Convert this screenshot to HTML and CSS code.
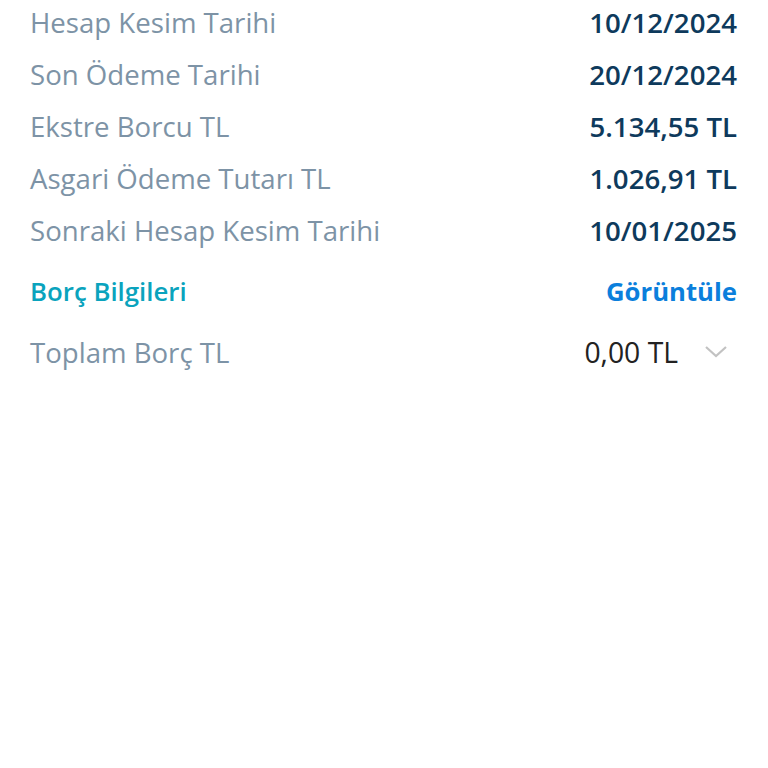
FILE: index.html
```html
<!DOCTYPE html>
<html lang="tr">
<head>
    <meta charset="UTF-8">
    <title>Ekstre</title>
    <link rel="stylesheet" href="styles.css">
</head>
<body>

<div class="ekstre">
    <div class="row">
        <span class="label">Hesap Kesim Tarihi</span>
        <span class="value">10/12/2024</span>
    </div>
    <div class="row">
        <span class="label">Son Ödeme Tarihi</span>
        <span class="value">20/12/2024</span>
    </div>
    <div class="row">
        <span class="label">Ekstre Borcu TL</span>
        <span class="value">5.134,55 TL</span>
    </div>
    <div class="row">
        <span class="label">Asgari Ödeme Tutarı TL</span>
        <span class="value">1.026,91 TL</span>
    </div>
    <div class="row">
        <span class="label">Sonraki Hesap Kesim Tarihi</span>
        <span class="value">10/01/2025</span>
    </div>

    <!--  borç bilgileri  -->
    <div class="row head">
        <span class="title">Borç Bilgileri</span>
        <a class="link">Görüntüle</a>
    </div>
    <div class="row total">
        <span class="label">Toplam Borç TL</span>
        <span class="amount">0,00 TL
            <svg class="chev" width="22" height="12" viewBox="0 0 22 12">
                <path d="M1 1 L11 10 L21 1" fill="none" stroke="#c2c2c2" stroke-width="2.2"/>
            </svg>
        </span>
    </div>
</div>

</body>
</html>
```

FILE: styles.css
```css
body {
    margin: 0;
    background: #fff;
    font-family: "Open Sans", "Noto Sans", sans-serif;
}

.ekstre {
    padding: 0 31px 0 30px;
    margin-top: -4px;
}

.row {
    display: flex;
    justify-content: space-between;
    align-items: center;
    height: 52px;
}

.label {
    font-size: 27.6px;
    color: #7d93a6;
}

.value {
    font-size: 27.6px;
    font-weight: 600;
    color: #0e3a5c;
}

/* section header */
.head {
    margin-top: 9px;
}

.title {
    font-size: 25.8px;
    font-weight: 600;
    color: #0aa3bd;
}

.link {
    font-size: 25.7px;
    font-weight: 700;
    color: #0b7fdc;
}

.total {
    margin-top: 9px;
}

.amount {
    display: flex;
    align-items: center;
    gap: 27px;
    font-size: 28.3px;
    color: #222;
}

.chev {
    margin-right: 10px;
}
```
